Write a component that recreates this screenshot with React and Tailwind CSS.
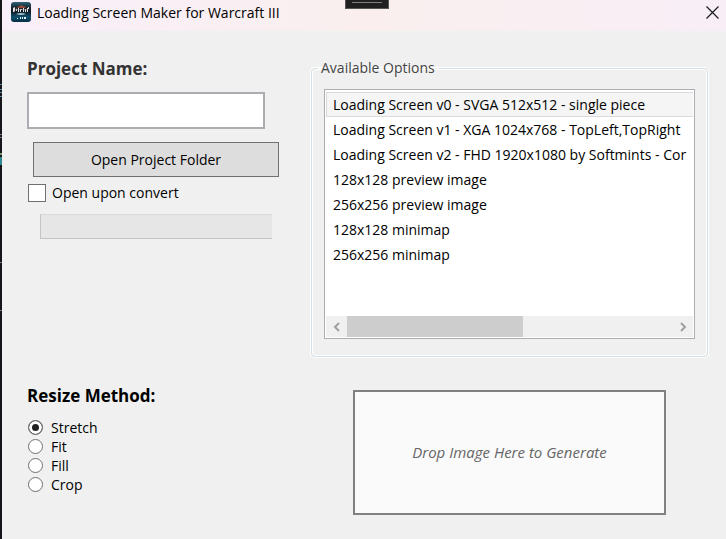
import { useState } from "react";

const OPTIONS = [
  "Loading Screen v0 - SVGA 512x512 - single piece",
  "Loading Screen v1 - XGA 1024x768 - TopLeft,TopRight",
  "Loading Screen v2 - FHD 1920x1080 by Softmints - Cor",
  "128x128 preview image",
  "256x256 preview image",
  "128x128 minimap",
  "256x256 minimap",
];

const RESIZE_METHODS = ["Stretch", "Fit", "Fill", "Crop"];

function AppIcon() {
  return (
    <svg viewBox="0 0 20 20" className="size-5 shrink-0" aria-hidden="true">
      <defs>
        <linearGradient id="icon-bg" x1="0" y1="0" x2="0" y2="1">
          <stop offset="0" stopColor="#2f6478" />
          <stop offset="0.3" stopColor="#14202a" />
          <stop offset="0.5" stopColor="#10202c" />
          <stop offset="0.75" stopColor="#0d506c" />
          <stop offset="1" stopColor="#062c42" />
        </linearGradient>
      </defs>
      <rect width="20" height="20" rx="3" fill="url(#icon-bg)" />
      <path d="M6 5l3-1 1-1 2 1 3 1-1 1H7z" fill="#8f4a38" />
      <path d="M2 6l2-1v4l-1 1H2zM5 8l1-2v3H5zM7 6h1v4H7zM9 7h2v1H9zM9 8h1v2H9zM12 6h1v4h-1zM14 7h1v3h-1zM16 6h1v4h-1zM17 5h1v2h-1z" fill="#e6e0de" />
      <path d="M3 7h14v1H3z" fill="#c9a9a0" opacity="0.45" />
      <path d="M5 12q5-2 10 0q-5 2-10 0z" fill="#a9c6d1" />
      <path d="M6 16h1v1H6zM9 15h1v2H9zM11 15h1v2h-1zM13 15h2v2h-2z" fill="#e4f2f6" />
    </svg>
  );
}

function DesktopEdge() {
  return (
    <div className="w-[2px] shrink-0 bg-[#15151a]">
      <svg width="2" height="420" viewBox="0 0 2 420" className="block" aria-hidden="true">
        <path d="M0 84h2v1H0zM0 89h2v1H0zM0 92h2v1H0zM0 96h2v1H0z" fill="#5d8ba3" />
        <path d="M0 134h2v1H0zM0 137h2v1H0zM0 262h2v1H0zM0 310h2v1H0z" fill="#77777c" />
        <path d="M0 153h2v2H0z" fill="#7d9a76" />
        <path d="M0 157h2v8H0z" fill="#2b8790" />
      </svg>
    </div>
  );
}

function TitleBar() {
  return (
    <header className="relative flex h-[31px] items-start bg-linear-to-r from-[#f8effa] via-[#faefee] to-[#f8eef6] pt-[2px] pr-[7px] pl-[9px]">
      <AppIcon />
      <h1 className="ml-[6px] grow text-[14px] leading-[22px] text-black">
        Loading Screen Maker for Warcraft III
      </h1>
      <button type="button" aria-label="Close" className="flex h-5 items-center">
        <svg width="13" height="13" viewBox="0 0 13 13" aria-hidden="true">
          <path d="M0.5 0.5l12 12M12.5 0.5l-12 12" stroke="#1a1a1a" strokeWidth="1.2" />
        </svg>
      </button>
      <div className="absolute top-0 left-1/2 h-[9px] w-[44px] -translate-x-[19px] border border-t-0 border-[#555] bg-[#202020] px-[6px] pt-[2px]">
        <div className="h-px bg-[#808080]" />
      </div>
    </header>
  );
}

function ScrollArrow({ label, path }) {
  return (
    <button type="button" aria-label={label} className="flex h-[21px] w-[21px] shrink-0 items-center justify-center">
      <svg width="8" height="10" viewBox="0 0 8 10" fill="none" aria-hidden="true">
        <path d={path} stroke="#a0a0a0" strokeWidth="2" />
      </svg>
    </button>
  );
}

function OptionsList() {
  const [current, setCurrent] = useState(0);

  return (
    <div className="flex h-[250px] flex-col border border-[#abadb3] bg-white px-px pt-[2px] pb-px">
      <ul className="grow overflow-hidden">
        {OPTIONS.map((option, i) => (
          <li key={option}>
            <button
              type="button"
              onClick={() => setCurrent(i)}
              className={`h-[25px] w-full border border-r-0 pl-[6px] text-left text-[14px] leading-[23px] whitespace-nowrap text-black ${
                i === current ? "border-[#dadada] bg-[#f5f5f5]" : "border-transparent"
              }`}
            >
              {option}
            </button>
          </li>
        ))}
      </ul>
      <div className="flex h-[21px] shrink-0 bg-[#f0f0f0]">
        <ScrollArrow label="Scroll left" path="M6 1L2 5l4 4" />
        <div className="grow">
          <div className="h-full w-[54%] bg-[#cdcdcd]" />
        </div>
        <ScrollArrow label="Scroll right" path="M2 1l4 4-4 4" />
      </div>
    </div>
  );
}

function ProjectPanel() {
  const [openAfter, setOpenAfter] = useState(false);

  return (
    <section className="flex flex-col items-start pt-[26px]">
      <label htmlFor="project-name" className="text-[17px] leading-6 font-bold text-[#333]">
        Project Name:
      </label>
      <input
        id="project-name"
        type="text"
        className="mt-[11px] h-[37px] w-[238px] border-2 border-[#abadb3] bg-white px-2 text-[14px]"
      />
      <button
        type="button"
        className="mt-[13px] ml-[6px] h-[35px] w-[246px] border border-[#707070] bg-[#dddddd] text-[14px] text-black"
      >
        Open Project Folder
      </button>
      <label className="mt-[6px] ml-px flex items-center gap-[6px] text-[14px] leading-[20px] text-black">
        <input
          type="checkbox"
          checked={openAfter}
          onChange={(e) => setOpenAfter(e.target.checked)}
          className="size-[18px] appearance-none border border-[#707070] bg-white checked:bg-[#707070]"
        />
        Open upon convert
      </label>
      <div
        role="progressbar"
        aria-label="Conversion progress"
        className="mt-[11px] ml-[13px] h-[25px] w-[232px] border border-r-0 border-t-[#d9d9d9] border-b-[#c4c4c4] border-l-[#c4c4c4] bg-[#e6e6e6]"
      />
    </section>
  );
}

function ResizePanel() {
  const [method, setMethod] = useState("Stretch");

  return (
    <fieldset>
      <legend className="text-[17px] leading-6 font-bold text-black">Resize Method:</legend>
      <div className="mt-[10px] ml-px flex flex-col">
        {RESIZE_METHODS.map((name) => (
          <label key={name} className="flex h-[19px] items-center gap-2 text-[14px] leading-[19px] text-black">
            <input
              type="radio"
              name="resize"
              checked={method === name}
              onChange={() => setMethod(name)}
              className="size-[15px] appearance-none rounded-full border border-[#707070] bg-white shadow-[inset_0_0_0_3px_#fff] checked:bg-[#212121]"
            />
            {name}
          </label>
        ))}
      </div>
    </fieldset>
  );
}

export default function App() {
  return (
    <div className="flex min-h-screen bg-[#f0f0f0] font-['Open_Sans','Noto_Sans',sans-serif]">
      <DesktopEdge />
      <div className="flex min-w-0 grow flex-col">
        <TitleBar />
        <main className="grid grid-cols-[284px_minmax(0,1fr)] pr-[18px] pl-[25px]">
          <ProjectPanel />
          <fieldset className="mt-[26px] min-w-0 rounded-[4px] border border-[#d5dfe5] px-[12px] pb-[17px] shadow-[0_0_0_1px_#fff,inset_0_0_0_1px_#fff]">
            <legend className="-ml-[6px] px-[3px] text-[14px] leading-[22px] text-[#444]">Available Options</legend>
            <div className="pt-[10px]">
              <OptionsList />
            </div>
          </fieldset>
          <div className="pt-[27px]">
            <ResizePanel />
          </div>
          <div className="flex justify-center pt-[33px]">
            <div className="flex h-[125px] w-[313px] items-center justify-center border-2 border-[#808080] bg-[#fafafa] text-[15px] text-[#666] italic">
              Drop Image Here to Generate
            </div>
          </div>
        </main>
      </div>
    </div>
  );
}
